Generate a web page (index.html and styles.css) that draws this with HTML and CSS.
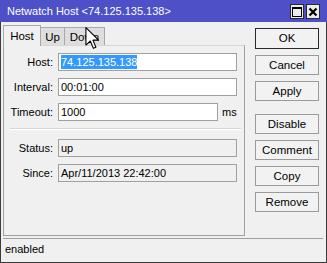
FILE: index.html
```html
<!DOCTYPE html>
<html lang="en">

<head>
    <meta charset="UTF-8">
    <title>Netwatch Host</title>
    <link rel="stylesheet" href="styles.css">
</head>
<body>
    <div class="window">
        <div class="titlebar">
            <span class="title">Netwatch Host &lt;74.125.135.138&gt;</span>
            <div class="winbtns">
                <div class="winbtn">
                    <svg width="10" height="10" viewBox="0 0 10 10"><rect x="0.5" y="0.5" width="9" height="9" fill="none" stroke="#000"/><rect x="0" y="0" width="10" height="2" fill="#000"/></svg>
                </div>
                <div class="winbtn">
                    <svg width="10" height="10" viewBox="0 0 10 10"><path d="M1.5 1.5 L8.5 8.5 M8.5 1.5 L1.5 8.5" stroke="#000" stroke-width="2.2"/></svg>
                </div>
            </div>
        </div>
        <div class="main">
            <div class="leftcol">
                <div class="tabs">
                    <div class="tab active">Host</div>
                    <div class="tab up">Up</div>
                    <div class="tab down">Down</div>
                </div>
                <div class="panel">
                    <div class="row">
                        <div class="label">Host:</div>
                        <div class="field"><span class="sel">74.125.135.138</span></div>
                    </div>
                    <div class="row">
                        <div class="label">Interval:</div>
                        <div class="field">00:01:00</div>
                    </div>
                    <div class="row">
                        <div class="label">Timeout:</div>
                        <div class="field short">1000</div>
                        <div class="unit">ms</div>
                    </div>
                    <div class="sep"></div>
                    <div class="row">
                        <div class="label">Status:</div>
                        <div class="field ro">up</div>
                    </div>
                    <div class="row">
                        <div class="label">Since:</div>
                        <div class="field ro">Apr/11/2013 22:42:00</div>
                    </div>
                </div>
            </div>
            <div class="buttons">
                <div class="btn default">OK</div>
                <div class="btn">Cancel</div>
                <div class="btn">Apply</div>
                <div class="btn spaced">Disable</div>
                <div class="btn">Comment</div>
                <div class="btn">Copy</div>
                <div class="btn">Remove</div>
            </div>
        </div>
        <div class="statusbar">enabled</div>
        <svg class="cursor" width="15" height="23" viewBox="0 0 13 21">
            <path d="M0.5 0.5 L0.5 16.5 L4.5 12.8 L7.3 19.5 L9.6 18.5 L6.9 12 L12 12 Z" fill="#fff" stroke="#000" stroke-width="1" stroke-linejoin="round"/>
        </svg>
    </div>
</body>

</html>
```

FILE: styles.css
```css
body {
    margin: 0;
    font-family: "Liberation Sans", Arial, sans-serif;
    font-size: 11px;
    color: #000;
}

.window {
    position: relative;
    width: 327px;
    height: 263px;
    box-sizing: border-box;
    background-color: #f0f0f0;
    border: 1px solid #3c3c3c;
    border-top: none;
    display: flex;
    flex-direction: column;
}

.titlebar {
    height: 22px;
    margin: 0 -1px;
    background-color: #4d50c6;
    display: flex;
    align-items: center;
    justify-content: space-between;
    padding: 0 7px 0 7px;
}

.title {
    color: #fff;
    font-size: 11px;
}

.winbtns {
    display: flex;
    gap: 2px;
    padding-top: 1px;
}

.winbtn {
    width: 12px;
    height: 13px;
    background-color: #ececec;
    border: 1px solid #2a2a2a;
    display: flex;
    align-items: center;
    justify-content: center;
}

.main {
    display: flex;
    padding: 2px 0 0 2px;
}

.leftcol {
    width: 242px;
}

.tabs {
    display: flex;
    height: 21px;
    align-items: flex-end;
}

.tab {
    height: 18px;
    line-height: 18px;
    box-sizing: border-box;
    text-align: center;
    background-color: #dedede;
    border: 1px solid #a8a8a8;
    border-bottom: none;
    border-left: none;
    font-size: 11.5px;
}

.tab.active {
    width: 38px;
    height: 21px;
    line-height: 21px;
    background-color: #f0f0f0;
    border-left: 1px solid #a8a8a8;
    margin-bottom: -1px;
    position: relative;
}

.tab.up {
    width: 24px;
}

.tab.down {
    width: 40px;
}

.panel {
    height: 191px;
    box-sizing: border-box;
    border: 1px solid #a0a0a0;
    border-top-color: #d6d6d6;
    padding: 7px 0 0 0;
}

.row {
    display: flex;
    align-items: center;
    margin-bottom: 7px;
}

.label {
    width: 49px;
    text-align: right;
    margin-right: 5px;
}

.field {
    width: 179px;
    height: 18px;
    box-sizing: border-box;
    border: 1px solid #a0a0a0;
    background-color: #fff;
    line-height: 16px;
    padding-left: 2px;
    white-space: nowrap;
}

.field.short {
    width: 160px;
}

.field.ro {
    background-color: #f0f0f0;
}

.sel {
    background-color: #3399ff;
    color: #fff;
    display: inline-block;
    height: 14px;
    line-height: 14px;
}

.unit {
    margin-left: 4px;
}

.sep {
    margin: 0 3px 9px 6px;
    border-top: 1px solid #d6d6d6;
    border-bottom: 1px solid #fff;
}

.buttons {
    width: 64px;
    margin-left: 10px;
    padding-top: 4px;
    display: flex;
    flex-direction: column;
    gap: 6px;
}

.btn {
    height: 20px;
    box-sizing: border-box;
    border: 1px solid #9a9a9a;
    background-color: #f2f2f2;
    text-align: center;
    line-height: 18px;
    font-size: 11.5px;
}

.btn.default {
    border-color: #2a2a2a;
    height: 21px;
}

.btn.spaced {
    margin-top: 7px;
}

.statusbar {
    margin: 2px 3px 0 2px;
    height: 21px;
    box-sizing: border-box;
    border-top: 1px solid #a0a0a0;
    line-height: 20px;
    padding-left: 2px;
}

.cursor {
    position: absolute;
    left: 84px;
    top: 27px;
}
```
